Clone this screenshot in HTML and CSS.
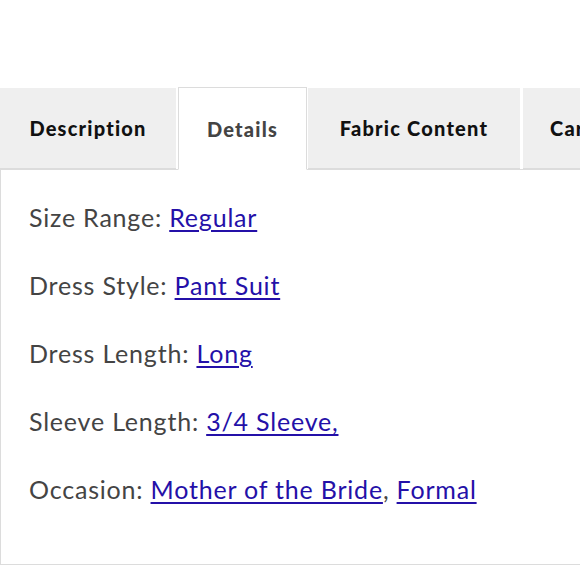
FILE: index.html
```html
<!DOCTYPE html>
<html lang="en">
<head>
<meta charset="utf-8">
<title>Details</title>
<link rel="stylesheet" href="styles.css">
</head>
<body>
<div class="product-tabs">
  <div class="tab-list">
    <div class="tab tab-description">Description</div>
    <div class="tab tab-details is-active">Details</div>
    <div class="tab tab-fabric">Fabric Content</div>
    <div class="tab tab-care">Care</div>
  </div>
  <div class="tab-panel">
    <p class="detail-row">Size Range: <a href="#">Regular</a></p>
    <p class="detail-row">Dress Style: <a href="#">Pant Suit</a></p>
    <p class="detail-row">Dress Length: <a href="#">Long</a></p>
    <p class="detail-row">Sleeve Length: <a href="#">3/4 Sleeve,</a></p>
    <p class="detail-row">Occasion: <a href="#">Mother of the Bride</a>, <a href="#">Formal</a></p>
  </div>
</div>
</body>
</html>
```

FILE: styles.css
```css
html, body {
  margin: 0;
  padding: 0;
  background: #ffffff;
  overflow: hidden;
}

body {
  font-family: "Lato", "Liberation Sans", sans-serif;
  width: 580px;
  height: 580px;
}

.product-tabs {
  padding-top: 87px;
  width: 640px;
}

.tab-list {
  display: flex;
  align-items: flex-end;
  gap: 2px;
  height: 82px;
}

.tab {
  box-sizing: border-box;
  height: 81px;
  background: #efefef;
  border-bottom: 1px solid #dcdcdc;
  display: flex;
  align-items: center;
  justify-content: center;
  font-size: 20px;
  font-weight: 900;
  color: #111111;
  letter-spacing: 1.2px;
  flex: none;
  padding-bottom: 1px;
  white-space: nowrap;
}

.tab-description { width: 176px; }
.tab-details { width: 129px; margin-right: -1px; }
.tab-fabric { width: 212px; }
.tab-care { width: 120px; margin-left: 1px; justify-content: flex-start; padding-left: 27px; }

.tab.is-active {
  height: 83px;
  background: #ffffff;
  border: 1px solid #dcdcdc;
  border-bottom: 1px solid #ffffff;
  color: #444444;
  position: relative;
  z-index: 1;
  margin-bottom: -1px;
  padding-bottom: 0;
}

.tab-panel {
  box-sizing: border-box;
  height: 396px;
  border: 1px solid #dcdcdc;
  padding: 29px 0 0 28px;
}

.detail-row {
  margin: 0 0 32px 0;
  font-size: 25px;
  line-height: 36px;
  color: #444444;
  letter-spacing: 0.8px;
}

.detail-row a {
  color: #2410a8;
  text-decoration: underline;
  text-underline-offset: 3px;
  text-decoration-thickness: 1.5px;
}
```
